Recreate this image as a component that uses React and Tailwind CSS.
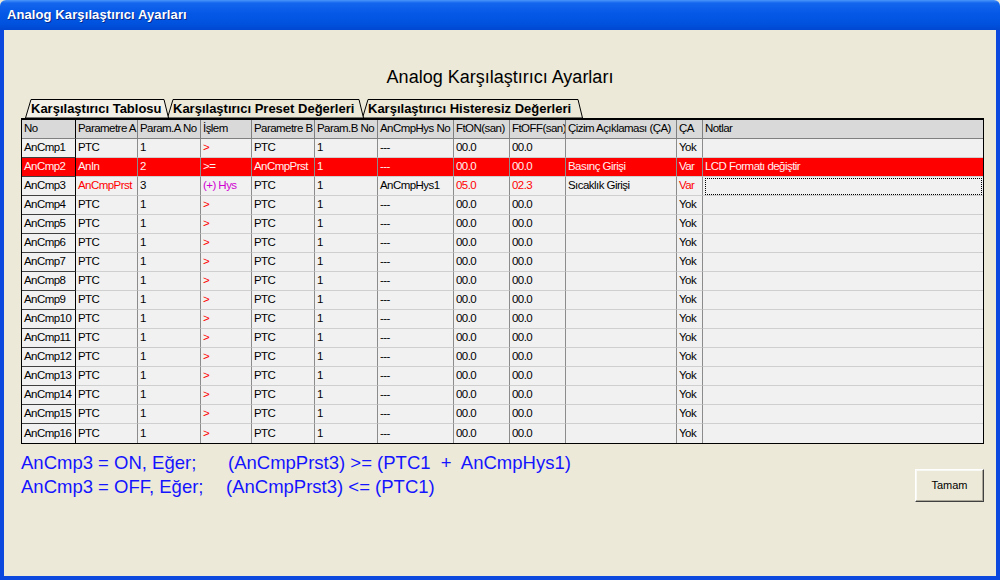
import React from "react";

const COLS =
  "grid grid-cols-[54px_62px_63px_51px_63px_63px_76px_56px_56px_111px_26px_1fr]";

const headers = [
  "No",
  "Parametre A",
  "Param.A No",
  "İşlem",
  "Parametre B",
  "Param.B No",
  "AnCmpHys No",
  "FtON(san)",
  "FtOFF(san)",
  "Çizim Açıklaması (ÇA)",
  "ÇA",
  "Notlar",
];

const R = "text-[#ff0000]";
const M = "text-[#d000d0]";

function makeRows() {
  const rows = [];
  rows.push({
    cells: ["AnCmp1", "PTC", "1", ">", "PTC", "1", "---", "00.0", "00.0", "", "Yok", ""],
    colors: { 3: R },
  });
  rows.push({
    red: true,
    cells: ["AnCmp2", "AnIn", "2", ">=", "AnCmpPrst", "1", "---", "00.0", "00.0", "Basınç Girişi", "Var", "LCD Formatı değiştir"],
    colors: {},
  });
  rows.push({
    cells: ["AnCmp3", "AnCmpPrst", "3", "(+) Hys", "PTC", "1", "AnCmpHys1", "05.0", "02.3", "Sıcaklık Girişi", "Var", ""],
    colors: { 1: R, 3: M, 7: R, 8: R, 10: R },
    focus: true,
  });
  for (let i = 4; i <= 16; i++) {
    rows.push({
      cells: ["AnCmp" + i, "PTC", "1", ">", "PTC", "1", "---", "00.0", "00.0", "", "Yok", ""],
      colors: { 3: R },
    });
  }
  return rows;
}

function Tab({ width, label, active, z }) {
  return (
    <div
      className={"relative h-[20px] flex items-center shrink-0 " + z}
      style={{ width }}
    >
      <svg
        className="absolute inset-0 w-full h-full"
        viewBox={`0 0 ${width} 20`}
        preserveAspectRatio="none"
      >
        <polygon
          points={`0.5,20 6,1.5 ${width - 5},1.5 ${width - 0.5},20`}
          fill={active ? "#f3f1e8" : "#ece9d8"}
          stroke="#000"
          strokeWidth="1"
        />
      </svg>
      <span className="relative pl-[6px] text-[13px] font-bold text-black leading-none whitespace-nowrap">
        {label}
      </span>
    </div>
  );
}

export default function App() {
  const rows = makeRows();
  return (
    <div className="w-[1000px] h-[580px] flex flex-col bg-[#ece9d8] font-['Liberation_Sans',Arial,sans-serif] overflow-hidden">
      {/* Title bar */}
      <div className="h-[30px] shrink-0 flex items-center pl-[7px] rounded-t-[6px] bg-[linear-gradient(to_bottom,#4a96fb_0%,#1466ee_10%,#0558e6_45%,#0052de_80%,#0047d0_100%)]">
        <span className="text-white font-bold text-[13px] tracking-[0.1px] [text-shadow:1px_1px_0_#0a2a8a]">
          Analog Karşılaştırıcı Ayarları
        </span>
      </div>
      {/* Body */}
      <div className="flex-1 flex flex-col border-l-4 border-r-4 border-b-4 border-[#0b48de] bg-[#ece9d8]">
        <div className="h-[37px] shrink-0" />
        <div className="h-[20px] flex items-center justify-center text-[18px] text-black leading-none">
          Analog Karşılaştırıcı Ayarları
        </div>
        <div className="h-[11px] shrink-0" />
        {/* Tabs */}
        <div className="flex pl-[21px] h-[20px] items-end">
          <Tab width={144} label="Karşılaştırıcı Tablosu" active z="z-30" />
          <Tab width={197} label="Karşılaştırıcı Preset Değerleri" z="z-20 -ml-[2px]" />
          <Tab width={221} label="Karşılaştırıcı Histeresiz Değerleri" z="z-10 -ml-[2px]" />
        </div>
        {/* Grid */}
        <div className="ml-[17px] w-[963px] border-l border-r border-b border-t-2 border-black bg-white text-[11.5px] tracking-[-0.55px] text-black">
          <div className={COLS + " bg-[#d9d9d9]"}>
            {headers.map((h, i) => (
              <div
                key={i}
                className={
                  "h-[19px] flex items-center pl-[2px] whitespace-nowrap overflow-hidden border-b border-[#808080] " +
                  (i < 11 ? "border-r " : "") +
                  (i === 0 ? "border-r-black" : "border-r-[#808080]")
                }
              >
                {h}
              </div>
            ))}
          </div>
          {rows.map((row, ri) => {
            const bg = row.red ? "bg-[#ff0000]" : "bg-[#f1f1f2]";
            return (
              <div key={ri} className={COLS + " " + bg}>
                {row.cells.map((c, ci) => {
                  const color = row.red
                    ? "text-[#fff0f0]"
                    : row.colors[ci] || "text-black";
                  const first = ci === 0;
                  const border =
                    (ci < 11 ? "border-r " : "") +
                    (first
                      ? "border-b border-b-[#404040] border-r-black"
                      : "border-b border-b-[#cfcfcf] border-r-[#8c8c8c]");
                  const isLastRow = ri === rows.length - 1;
                  return (
                    <div
                      key={ci}
                      className={
                        "h-[19px] flex items-center pl-[2px] whitespace-nowrap overflow-hidden " +
                        (isLastRow ? (ci < 11 ? "border-r " + (first ? "border-r-black" : "border-r-[#8c8c8c]") : "") : border) +
                        " " +
                        color
                      }
                    >
                      {row.focus && ci === 11 ? (
                        <div className="w-full h-[17px] border border-dotted border-black mr-[1px]" />
                      ) : (
                        c
                      )}
                    </div>
                  );
                })}
              </div>
            );
          })}
        </div>
        {/* Bottom area */}
        <div className="flex ml-[17px] w-[963px] mt-[9px]">
          <div className="flex-1 flex flex-col text-[18.5px] text-[#1414ff] leading-[24px] -mt-[2px]">
            <div className="flex whitespace-pre">
              <span className="w-[207px]">AnCmp3 = ON, Eğer;</span>
              <span>(AnCmpPrst3) &gt;= (PTC1  +  AnCmpHys1)</span>
            </div>
            <div className="flex whitespace-pre">
              <span className="w-[205px]">AnCmp3 = OFF, Eğer;</span>
              <span>(AnCmpPrst3) &lt;= (PTC1)</span>
            </div>
          </div>
          <div className="pt-[16px]">
            <button className="w-[69px] h-[33px] bg-[#ece9d8] text-[11px] text-black border border-t-white border-l-white border-r-[#404040] border-b-[#404040] shadow-[inset_-1px_-1px_0_#aca899,inset_1px_1px_0_#f8f8f4]">
              Tamam
            </button>
          </div>
        </div>
      </div>
    </div>
  );
}
